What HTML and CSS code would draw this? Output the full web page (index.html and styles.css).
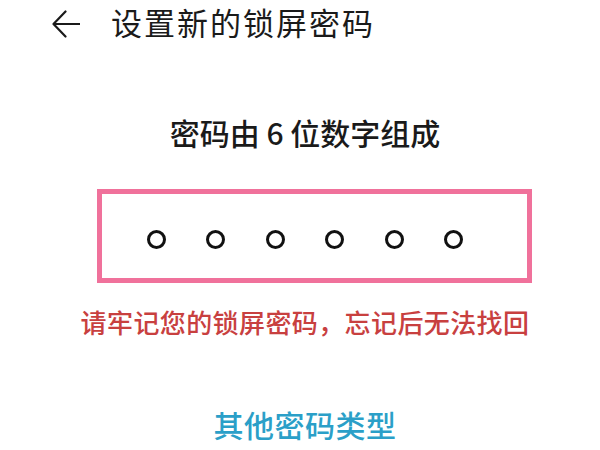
FILE: index.html
```html
<!DOCTYPE html>
<html lang="zh-CN">
<head>
<meta charset="utf-8">
<title>设置新的锁屏密码</title>
<link rel="stylesheet" href="styles.css">
</head>
<body>
<header class="header">
  <svg class="back" viewBox="0 0 28 28" width="28" height="28" aria-hidden="true">
    <path d="M27.5 14H1.5M13.5 1.5L1.5 14L13.5 26.5" fill="none" stroke="#1a1a1a" stroke-width="2.2" stroke-linecap="round" stroke-linejoin="round"/>
  </svg>
  <h1 class="title">设置新的锁屏密码</h1>
</header>
<main class="main">
  <p class="subtitle">密码由 6 位数字组成</p>
  <div class="pin-box">
    <div class="dots">
      <span class="dot"></span><span class="dot"></span><span class="dot"></span><span class="dot"></span><span class="dot"></span><span class="dot"></span>
    </div>
  </div>
  <p class="warning">请牢记您的锁屏密码，忘记后无法找回</p>
  <p class="other">其他密码类型</p>
</main>
</body>
</html>
```
FILE: styles.css
```css
html, body {
  margin: 0;
  padding: 0;
  background: #ffffff;
}
body {
  width: 600px;
  height: 450px;
  overflow: hidden;
  font-family: "Noto Sans CJK SC", "Noto Sans", sans-serif;
  color: #1a1a1a;
}
.header {
  display: flex;
  align-items: flex-start;
  height: 44px;
  padding-left: 52px;
}
.back {
  margin-top: 10px;
  margin-right: 31px;
  flex: none;
}
.title {
  margin: 0;
  font-size: 31px;
  line-height: 44px;
  font-weight: 400;
  letter-spacing: 2px;
  white-space: nowrap;
}
.main {
  padding-left: 10px;
  text-align: center;
}
.subtitle {
  margin: 73px 0 0;
  font-size: 30px;
  line-height: 30px;
  font-weight: 500;
}
.pin-box {
  box-sizing: border-box;
  width: 435px;
  margin: 42px 0 0 87px;
  border: 5px solid #f0719b;
  padding: 36px 0 29px 44.5px;
}
.dots {
  display: flex;
  gap: 40.6px;
}
.dot {
  box-sizing: border-box;
  width: 19px;
  height: 19px;
  border: 3px solid #111111;
  border-radius: 50%;
}
.warning {
  margin: 26px 0 0;
  font-size: 26px;
  line-height: 26px;
  font-weight: 500;
  letter-spacing: 0.4px;
  color: #c8403f;
  white-space: nowrap;
}
.other {
  margin: 74px 0 0;
  font-size: 30px;
  line-height: 30px;
  font-weight: 500;
  letter-spacing: 0.5px;
  color: #2b9fc8;
}
```
